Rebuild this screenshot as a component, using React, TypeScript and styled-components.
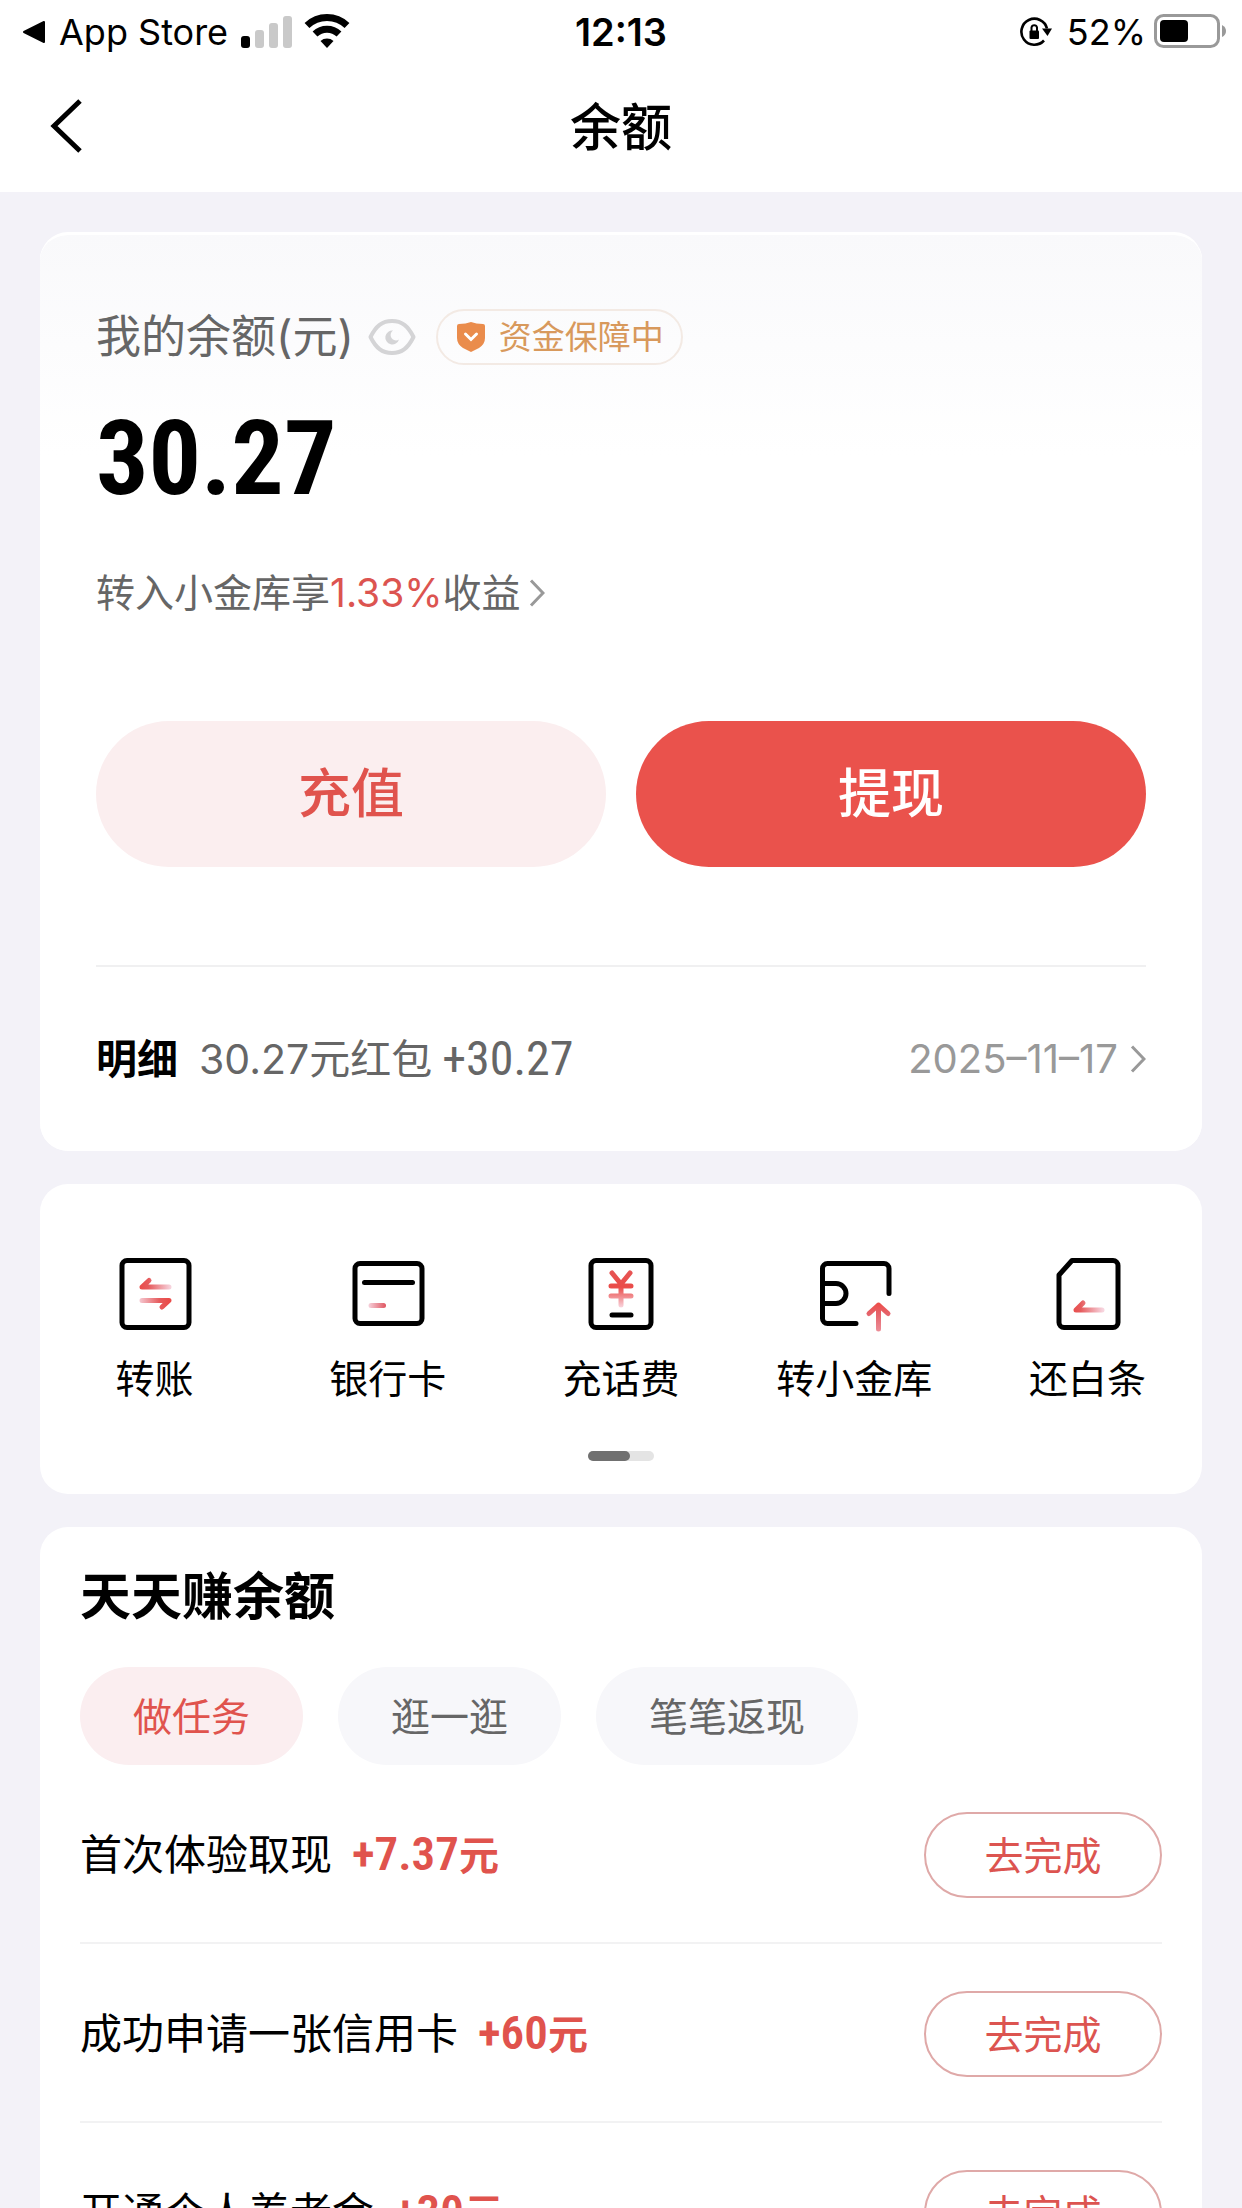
import React, { useState } from "react";
import styled, { createGlobalStyle } from "styled-components";

const sans = `Inter, "Noto Sans CJK SC", sans-serif`;
const narrow = `"Roboto Condensed", "Liberation Sans Narrow", "Noto Sans CJK SC", sans-serif`;

const GlobalStyle = createGlobalStyle`
  * { box-sizing: border-box; }
  body { margin: 0; background: #f3f2f8; font-family: ${sans}; color: #000; }
  button { font-family: inherit; padding: 0; border: 0; background: none; cursor: pointer; color: inherit; }
  a { color: inherit; text-decoration: none; }
  h1, h2, p, ul { margin: 0; padding: 0; }
  svg { display: block; flex: none; }
`;

const Screen = styled.div`
  height: 100vh;
  overflow: hidden;
  display: flex;
  flex-direction: column;
`;

const StatusBar = styled.div`
  display: grid;
  grid-template-columns: 1fr auto 1fr;
  align-items: center;
  height: 64px;
  padding: 0 14px;
  background: #fff;
  font-size: 36px;
  line-height: 62px;
  flex: none;
`;

const StatusGroup = styled.div<{ $end?: boolean }>`
  display: flex;
  align-items: center;
  justify-content: ${(p) => (p.$end ? "flex-end" : "flex-start")};
  gap: ${(p) => (p.$end ? 8 : 13)}px;
  padding-left: 8px;
`;

const RotationLock = styled.svg`
  margin-right: 6px;
`;

const Clock = styled.time`
  font-size: 38px;
  font-weight: 600;
`;

const NavBar = styled.header`
  display: grid;
  grid-template-columns: 1fr auto 1fr;
  align-items: center;
  height: 128px;
  padding: 0 48px;
  background: #fff;
  flex: none;
`;

const BackButton = styled.button`
  justify-self: start;
  padding-bottom: 4px;
`;

const Title = styled.h1`
  font-size: 51px;
  line-height: 64px;
  font-weight: 500;
`;

const Content = styled.main`
  display: flex;
  flex-direction: column;
  gap: 33px;
  padding: 40px 40px 0;
`;

const Card = styled.section`
  background: #fff;
  border-radius: 28px;
  flex: none;
`;

const BalanceCard = styled(Card)`
  padding: 74px 56px 60px;
  border: 3px solid #fff;
  border-width: 3px 0 0;
  background: linear-gradient(#f9f9fb, #fff 220px) padding-box, #fff border-box;
`;

const LabelRow = styled.div`
  display: flex;
  align-items: center;
  height: 56px;
`;

const BalanceLabel = styled.span`
  font-size: 45px;
  line-height: 56px;
  color: #666;
`;

const EyeButton = styled.button`
  margin: 0 20px 0 14px;
`;

const SafeBadge = styled.a`
  display: flex;
  align-items: center;
  gap: 13px;
  height: 56px;
  padding: 0 17px 0 18px;
  border: 2px solid #f3eae4;
  border-radius: 28px;
  font-size: 33px;
  line-height: 52px;
  color: #d8995c;
`;

const Amount = styled.p`
  margin-top: 34px;
  font-family: ${narrow};
  font-size: 104px;
  line-height: 120px;
  font-weight: 700;
`;

const Promo = styled.a`
  display: flex;
  align-items: center;
  gap: 8px;
  margin-top: 46px;
  font-size: 39px;
  line-height: 56px;
  color: #666;
`;

const Rate = styled.span`
  color: #dc5450;
`;

const Actions = styled.div`
  display: grid;
  grid-template-columns: 1fr 1fr;
  gap: 30px;
  margin-top: 100px;
`;

const ActionButton = styled.button<{ $primary?: boolean }>`
  height: 146px;
  padding-bottom: 8px;
  border-radius: 73px;
  font-size: 53px;
  font-weight: 500;
  color: ${(p) => (p.$primary ? "#fff" : "#e0534d")};
  background: ${(p) => (p.$primary ? "#ea524c" : "#fbeeef")};
`;

const DetailRow = styled.a`
  display: flex;
  align-items: center;
  margin-top: 98px;
  padding-top: 60px;
  border-top: 2px solid #f0f0f1;
  font-size: 41px;
  line-height: 64px;
  color: #666;
`;

const DetailTitle = styled.span`
  margin-right: 21px;
  font-weight: 700;
  color: #000;
`;

const DetailAmount = styled.span`
  margin-left: 10px;
  font-family: ${narrow};
  font-size: 48px;
`;

const DetailDate = styled.time`
  display: flex;
  align-items: center;
  gap: 12px;
  margin-left: auto;
  font-size: 40px;
  color: #999;
`;

const ShortcutCard = styled(Card)`
  padding: 72px 0 33px;
`;

const ShortcutGrid = styled.nav`
  display: grid;
  grid-template-columns: repeat(5, 1fr);
  margin: 0 -2px;
`;

const Shortcut = styled.a`
  display: flex;
  flex-direction: column;
  align-items: center;
  gap: 19px;
  font-size: 39px;
  line-height: 56px;
`;

const Pager = styled.div`
  width: 66px;
  height: 10px;
  margin: 44px auto 0;
  border-radius: 5px;
  background: #e4e4e4;
`;

const PagerThumb = styled.div`
  width: 42px;
  height: 10px;
  border-radius: 5px;
  background: #707070;
`;

const TaskCard = styled(Card)`
  padding: 38px 40px 0;
`;

const TaskHeading = styled.h2`
  font-size: 51px;
  line-height: 64px;
  font-weight: 700;
`;

const Tabs = styled.div`
  display: flex;
  gap: 35px;
  margin-top: 38px;
`;

const Tab = styled.button<{ $active: boolean }>`
  height: 98px;
  padding: 0 53px 4px;
  border-radius: 49px;
  font-size: 39px;
  color: ${(p) => (p.$active ? "#e0534d" : "#666")};
  background: ${(p) => (p.$active ? "#fbeef0" : "#f7f7fa")};
`;

const TaskList = styled.ul`
  list-style: none;
`;

const TaskRow = styled.li`
  display: flex;
  align-items: center;
  height: 179px;
  padding-top: 3px;
  border-bottom: 2px solid #f2f2f3;
  font-size: 42px;
  line-height: 64px;
`;

const Reward = styled.span`
  margin-left: 20px;
  font-family: ${narrow};
  font-size: 47px;
  font-weight: 600;
  color: #e0534d;
`;

const Unit = styled.span`
  font-size: 40px;
`;

const GoButton = styled.button`
  width: 238px;
  height: 86px;
  padding-bottom: 4px;
  margin-left: auto;
  border: 2px solid #dfa9a8;
  border-radius: 43px;
  font-size: 39px;
  color: #dc5450;
`;

const Chevron = () => (
  <svg width="16" height="28" viewBox="0 0 16 28" fill="none" stroke="#999" strokeWidth="3">
    <path d="M2 1.5L14 14L2 26.5" />
  </svg>
);

const Gradients = () => (
  <defs>
    <linearGradient id="fadeRight" gradientUnits="userSpaceOnUse" x1="22" y1="0" x2="54" y2="0">
      <stop stopColor="#ea4b48" />
      <stop offset=".3" stopColor="#e65b5d" />
      <stop offset="1" stopColor="#f7d5df" />
    </linearGradient>
    <linearGradient id="fadeLeft" gradientUnits="userSpaceOnUse" x1="52" y1="0" x2="20" y2="0">
      <stop stopColor="#ea4b48" />
      <stop offset=".3" stopColor="#e65b5d" />
      <stop offset="1" stopColor="#f7d5df" />
    </linearGradient>
    <linearGradient id="fadeShort" gradientUnits="userSpaceOnUse" x1="36" y1="0" x2="18" y2="0">
      <stop stopColor="#df5560" />
      <stop offset="1" stopColor="#f7d5df" />
    </linearGradient>
    <linearGradient id="fadeDown" gradientUnits="userSpaceOnUse" x1="0" y1="14" x2="0" y2="52">
      <stop stopColor="#e65555" />
      <stop offset=".45" stopColor="#ea4b48" />
      <stop offset="1" stopColor="#f9d9e2" />
    </linearGradient>
    <linearGradient id="fadeUp" gradientUnits="userSpaceOnUse" x1="0" y1="46" x2="0" y2="75">
      <stop stopColor="#ee4b45" />
      <stop offset=".4" stopColor="#e5626a" />
      <stop offset="1" stopColor="#ec8d97" />
    </linearGradient>
  </defs>
);

const line = { fill: "none", stroke: "#000", strokeWidth: 5, strokeLinecap: "round", strokeLinejoin: "round" } as const;

const TransferIcon = () => (
  <svg width="76" height="76" viewBox="0 0 76 76" {...line}>
    <Gradients />
    <rect x="5" y="4.500" width="67" height="67" rx="5" />
    <path stroke="url(#fadeRight)" d="M52 31H25L32 24.500" />
    <path stroke="url(#fadeLeft)" d="M25 44.500H52L45 51" />
  </svg>
);

const BankCardIcon = () => (
  <svg width="76" height="76" viewBox="0 0 76 76" {...line}>
    <rect x="5" y="7.500" width="67" height="60" rx="5" />
    <path d="M14.500 26.500H62.500" />
    <path stroke="url(#fadeShort)" d="M21 49.500H33.500" />
  </svg>
);

const PhoneIcon = () => (
  <svg width="76" height="76" viewBox="0 0 76 76" {...line}>
    <rect x="8" y="4.500" width="60" height="67" rx="5" />
    <path stroke="url(#fadeDown)" d="M29 17L38 28L47 17M28 30H48M28 40H48M38 28V49" />
    <path d="M29 59H48" />
  </svg>
);

const VaultIcon = () => (
  <svg width="76" height="76" viewBox="0 0 76 76" {...line}>
    <path d="M40 67.500H11.500A5 5 0 0 1 6.500 62.500V12.500A5 5 0 0 1 11.500 7.500H68A5 5 0 0 1 73 12.500V37.500M6.500 27.500H20A10 10 0 0 1 20 47.500H6.500" />
    <path stroke="url(#fadeUp)" d="M62.500 73V49M53 57.500L62.500 49L72 57.500" />
  </svg>
);

const BillIcon = () => (
  <svg width="76" height="76" viewBox="0 0 76 76" {...line}>
    <path d="M23 4.500H64A5 5 0 0 1 69 9.500V66.500A5 5 0 0 1 64 71.500H15A5 5 0 0 1 10 66.500V19Z" />
    <path stroke="url(#fadeRight)" d="M53 54H27L34 47" />
  </svg>
);

const shortcuts = [
  { label: "转账", Icon: TransferIcon },
  { label: "银行卡", Icon: BankCardIcon },
  { label: "充话费", Icon: PhoneIcon },
  { label: "转小金库", Icon: VaultIcon },
  { label: "还白条", Icon: BillIcon },
];

const tabs = ["做任务", "逛一逛", "笔笔返现"];

const tasks = [
  { name: "首次体验取现", reward: "+7.37" },
  { name: "成功申请一张信用卡", reward: "+60" },
  { name: "开通个人养老金", reward: "+30" },
];

export default function App() {
  const [tab, setTab] = useState(0);
  return (
    <>
      <GlobalStyle />
      <Screen>
        <StatusBar>
          <StatusGroup>
            <svg width="24" height="24" viewBox="0 0 24 24">
              <path d="M2 12L22 2V22Z" stroke="#000" strokeWidth="2" strokeLinejoin="round" />
            </svg>
            <span>App Store</span>
            <svg width="112" height="36" viewBox="0 0 112 36">
              <rect x="0" y="22" width="9" height="12" rx="3" />
              <g fill="#c9c9c9">
                <rect x="14" y="16" width="9" height="18" rx="3" />
                <rect x="28" y="9" width="9" height="25" rx="3" />
                <rect x="42" y="2" width="9" height="32" rx="3" />
              </g>
              <g fill="none" stroke="#000" strokeWidth="7">
                <path d="M66 11.500A29 29 0 0 1 106 11.500" />
                <path d="M74 20A17.500 17.500 0 0 1 98 20" />
              </g>
              <path d="M86 34L79.500 27A10 10 0 0 1 92.500 27Z" />
            </svg>
          </StatusGroup>
          <Clock>12:13</Clock>
          <StatusGroup $end>
            <RotationLock width="34" height="32" viewBox="0 0 34 32" fill="none" stroke="#000" strokeWidth="2.600">
              <path d="M25 24.500A13 13 0 1 1 28 12.500" />
              <path d="M23 12.500H33L28.500 20Z" fill="#000" stroke="none" />
              <rect x="10.500" y="14.500" width="9.500" height="8.500" rx="1" fill="#000" stroke="none" />
              <path d="M12.500 15V11.500A2.800 2.800 0 0 1 18 11.500V15" strokeWidth="2" />
            </RotationLock>
            <span>52%</span>
            <svg width="74" height="36" viewBox="0 0 74 36">
              <rect x="1.500" y="1.500" width="63" height="31" rx="8" fill="none" stroke="#999" strokeWidth="3" />
              <rect x="6" y="6" width="28" height="22" rx="4" />
              <path d="M68 11Q72 13 72 17T68 23Z" fill="#999" />
            </svg>
          </StatusGroup>
        </StatusBar>
        <NavBar>
          <BackButton aria-label="返回">
            <svg width="36" height="56" viewBox="0 0 36 56" fill="none" stroke="#000" strokeWidth="5">
              <path d="M32 3L6 28L32 53" />
            </svg>
          </BackButton>
          <Title>余额</Title>
        </NavBar>
        <Content>
          <BalanceCard>
            <LabelRow>
              <BalanceLabel>我的余额(元)</BalanceLabel>
              <EyeButton aria-label="隐藏余额">
                <svg width="48" height="38" viewBox="0 0 48 38" fill="none">
                  <path
                    d="M2.500 19C8 8 14 3 24 3S40 8 45.500 19C40 30 34 35 24 35S8 30 2.500 19Z"
                    stroke="#d4d4d6"
                    strokeWidth="4"
                    strokeLinejoin="round"
                  />
                  <path d="M25 12.500A7 7 0 1 0 31 21.500A5 5 0 0 1 25 12.500Z" fill="#d4d4d6" />
                </svg>
              </EyeButton>
              <SafeBadge href="#safe">
                <svg width="30" height="32" viewBox="0 0 30 32">
                  <path
                    d="M15 1Q20 3 27 3Q29 3 29 5V17Q29 23 23 27L15 31L7 27Q1 23 1 17V5Q1 3 3 3Q10 3 15 1Z"
                    fill="#ea8c4c"
                  />
                  <path d="M9.500 13L15 18.500L20.500 13" fill="none" stroke="#fff" strokeWidth="3" strokeLinecap="round" />
                </svg>
                资金保障中
              </SafeBadge>
            </LabelRow>
            <Amount>30.27</Amount>
            <Promo href="#vault">
              <span>
                转入小金库享<Rate>1.33%</Rate>收益
              </span>
              <Chevron />
            </Promo>
            <Actions>
              <ActionButton>充值</ActionButton>
              <ActionButton $primary>提现</ActionButton>
            </Actions>
            <DetailRow href="#detail">
              <DetailTitle>明细</DetailTitle>
              <span>30.27元红包</span>
              <DetailAmount>+30.27</DetailAmount>
              <DetailDate>
                2025–11–17
                <Chevron />
              </DetailDate>
            </DetailRow>
          </BalanceCard>
          <ShortcutCard>
            <ShortcutGrid>
              {shortcuts.map(({ label, Icon }) => (
                <Shortcut key={label} href={"#" + label}>
                  <Icon />
                  {label}
                </Shortcut>
              ))}
            </ShortcutGrid>
            <Pager>
              <PagerThumb />
            </Pager>
          </ShortcutCard>
          <TaskCard>
            <TaskHeading>天天赚余额</TaskHeading>
            <Tabs>
              {tabs.map((label, i) => (
                <Tab key={label} $active={i === tab} onClick={() => setTab(i)}>
                  {label}
                </Tab>
              ))}
            </Tabs>
            <TaskList>
              {tasks.map((t) => (
                <TaskRow key={t.name}>
                  <span>{t.name}</span>
                  <Reward>
                    {t.reward}
                    <Unit>元</Unit>
                  </Reward>
                  <GoButton>去完成</GoButton>
                </TaskRow>
              ))}
            </TaskList>
          </TaskCard>
        </Content>
      </Screen>
    </>
  );
}
